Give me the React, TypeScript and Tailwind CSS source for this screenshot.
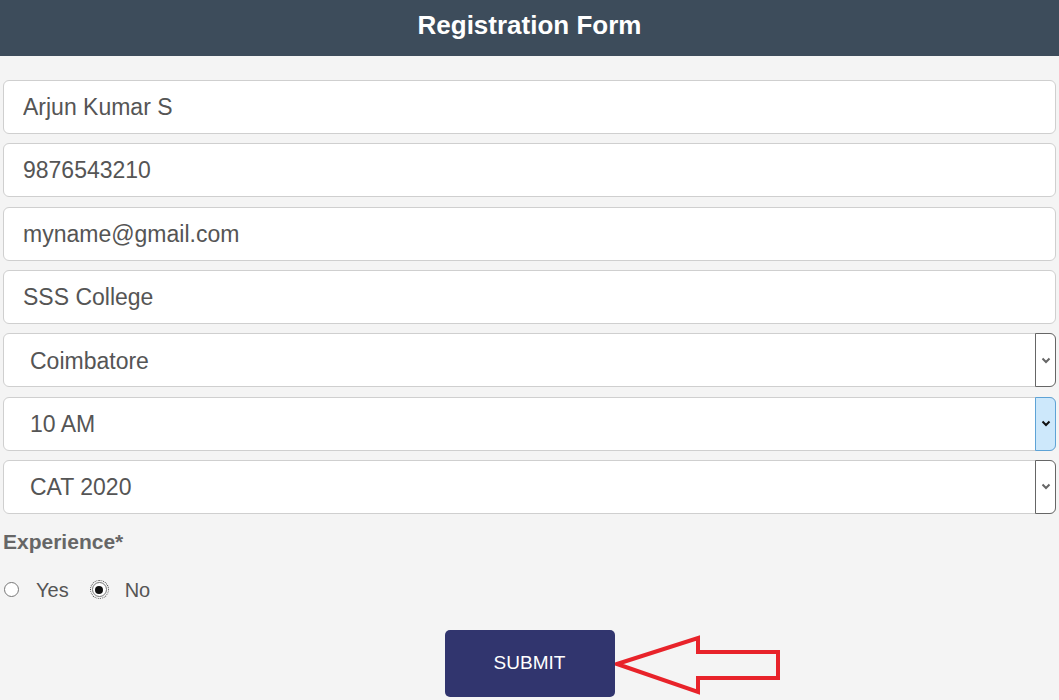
import React from 'react';

const fields = ['Arjun Kumar S', '9876543210', 'myname@gmail.com', 'SSS College'];

const selects = [
  { value: 'Coimbatore', active: false },
  { value: '10 AM', active: true },
  { value: 'CAT 2020', active: false },
];

const Chevron = ({ dark }: { dark: boolean }) => (
  <svg width="10" height="7" viewBox="0 0 10 7">
    <path d="M1.5 1.5 L5 5 L8.5 1.5" fill="none" stroke={dark ? '#111' : '#666'} strokeWidth="2" />
  </svg>
);

const App = () => {
  return (
    <div className="min-h-[700px] bg-[#f4f4f4] font-['Liberation_Sans',Arial,sans-serif]">
      <header className="h-[56px] bg-[#3d4c5b] flex items-center justify-center">
        <h1 className="text-white font-bold text-[26px] leading-none -mt-[6px]">Registration Form</h1>
      </header>

      <form className="px-[3px] pt-[24px]" onSubmit={(e) => e.preventDefault()}>
        <div className="flex flex-col gap-[9.33px]">
          {fields.map((f) => (
            <input
              key={f}
              readOnly
              value={f}
              className="h-[54px] w-full bg-white border border-[#cfcfcf] rounded-[6px] pl-[19px] pt-[1px] text-[23px] text-[#555] outline-none"
            />
          ))}
          {selects.map((s) => (
            <div
              key={s.value}
              className="h-[54px] w-full bg-white border border-[#cfcfcf] rounded-[6px] flex items-stretch"
            >
              <select
                value={s.value}
                onChange={() => {}}
                className="flex-1 appearance-none bg-transparent pl-[26px] pt-[1px] text-[23px] text-[#555] outline-none"
              >
                <option>{s.value}</option>
              </select>
              <div
                className={
                  s.active
                    ? 'w-[21px] -my-px -mr-px flex items-center justify-center rounded-r-[6px] border border-[#5ea3d6] bg-[#cde8fb]'
                    : 'w-[21px] -my-px -mr-px flex items-center justify-center rounded-r-[6px] border border-[#666] bg-white'
                }
              >
                <Chevron dark={s.active} />
              </div>
            </div>
          ))}
        </div>

        <p className="mt-[17px] text-[21px] font-bold text-[#666] leading-none">Experience*</p>

        <div className="mt-[28px] flex items-center text-[20px] text-[#555] h-[20px]">
          <span className="w-[15px] h-[15px] rounded-full border border-[#777] bg-white ml-[1px]" />
          <span className="ml-[17px]">Yes</span>
          <span className="ml-[23px] w-[15px] h-[15px] rounded-full border border-[#777] bg-white flex items-center justify-center outline-1 outline-dotted outline-[#444] outline-offset-[1px]">
            <span className="w-[8px] h-[8px] rounded-full bg-[#111]" />
          </span>
          <span className="ml-[18px]">No</span>
        </div>

        <div className="mt-[30px] flex justify-center">
          <div className="relative">
            <button
              type="submit"
              className="w-[170px] h-[67px] rounded-[5px] bg-[#31356e] text-white text-[19px]"
            >
              SUBMIT
            </button>
            <svg
              className="absolute left-[170px] top-[5px]"
              width="166"
              height="60"
              viewBox="0 0 166 60"
            >
              <polygon
                points="2,29 83,3 83,17 163,17 163,43 83,43 83,57"
                fill="none"
                stroke="#e8232a"
                strokeWidth="4"
                strokeLinejoin="miter"
              />
            </svg>
          </div>
        </div>
      </form>
    </div>
  );
};

export default App;
